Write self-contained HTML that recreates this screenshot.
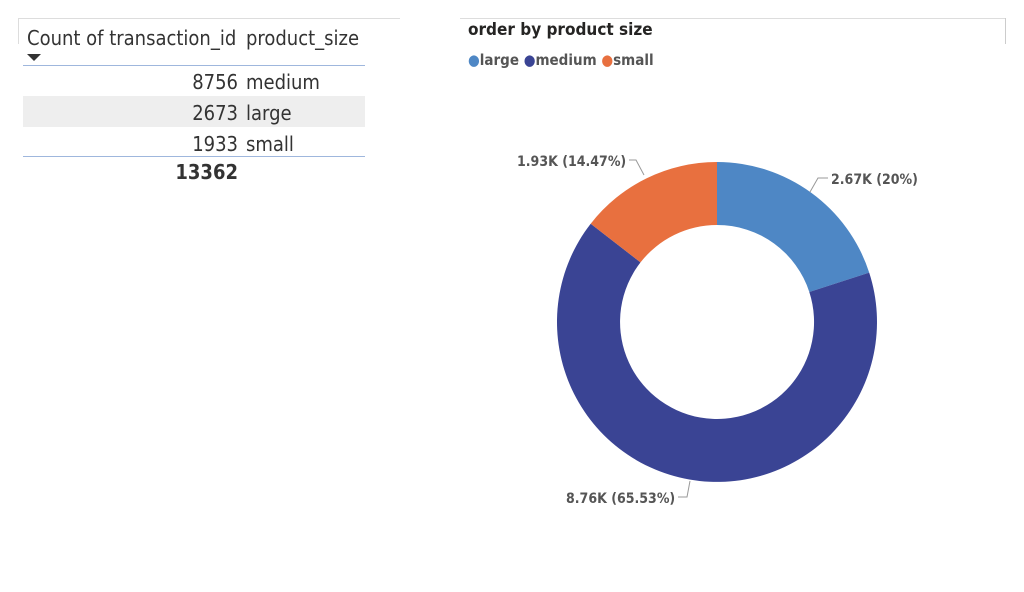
<!DOCTYPE html>
<html><head><meta charset="utf-8"><style>
body{margin:0;width:1024px;height:592px;background:#fff;position:relative;overflow:hidden;font-family:"DejaVu Sans","Liberation Sans",sans-serif;}
.t{position:absolute;font-size:20px;color:#333;font-family:"DejaVu Sans Condensed","DejaVu Sans",sans-serif;}
</style></head><body>
<div style="position:absolute;left:18px;top:18px;width:382px;height:1px;background:#ddd"></div>
<div style="position:absolute;left:18px;top:18px;width:1px;height:26px;background:#ddd"></div>
<div style="position:absolute;left:460px;top:18px;width:546px;height:1px;background:#ddd"></div>
<div style="position:absolute;left:1005px;top:18px;width:1px;height:26px;background:#ccc"></div>
<div class="t" style="left:27px;top:26px">Count of transaction_id</div>
<div class="t" style="left:246px;top:26px">product_size</div>
<svg style="position:absolute;left:27px;top:54px" width="14" height="8"><path d="M0 0H14L7 7Z" fill="#333"/></svg>
<div style="position:absolute;left:23px;top:65px;width:342px;height:1px;background:#9fb7dd"></div>
<div style="position:absolute;left:23px;top:96px;width:342px;height:31px;background:#eee"></div>
<div class="t" style="left:140px;top:70px;width:98px;text-align:right">8756</div><div class="t" style="left:246px;top:70px">medium</div>
<div class="t" style="left:140px;top:101px;width:98px;text-align:right">2673</div><div class="t" style="left:246px;top:101px">large</div>
<div class="t" style="left:140px;top:132px;width:98px;text-align:right">1933</div><div class="t" style="left:246px;top:132px">small</div>
<div style="position:absolute;left:23px;top:156px;width:342px;height:1px;background:#9fb7dd"></div>
<div class="t" style="left:140px;top:160px;width:98px;text-align:right;font-weight:bold">13362</div>
<div style="position:absolute;left:468px;top:20px;font-size:17px;font-weight:bold;color:#252423;font-family:'DejaVu Sans Condensed','DejaVu Sans',sans-serif">order by product size</div>
<div style="position:absolute;left:468px;top:51px;font-size:15px;font-weight:bold;color:#555;font-family:'DejaVu Sans Condensed','DejaVu Sans',sans-serif">
<span style="color:#4e87c5">●</span>large <span style="color:#3a4494">●</span>medium <span style="color:#e8703f">●</span>small</div>
<svg style="position:absolute;left:0;top:0" width="1024" height="592">
<path d="M717 162A160 160 0 0 1 869.2 272.6L809.3 292A97 97 0 0 0 717 225Z" fill="#4e87c5"/>
<path d="M869.2 272.6A160 160 0 1 1 590.7 223.7L640.5 262.4A97 97 0 1 0 809.3 292Z" fill="#3a4494"/>
<path d="M590.7 223.7A160 160 0 0 1 717 162L717 225A97 97 0 0 0 640.5 262.4Z" fill="#e8703f"/>
<g stroke="#999" fill="none" stroke-width="1">
<path d="M629 160H636L644 175"/><path d="M828 178H818L810 192"/><path d="M678 497H687L690 481"/></g>
<g font-family="DejaVu Sans Condensed,DejaVu Sans,sans-serif" font-weight="bold" font-size="14" fill="#555">
<text x="517" y="166">1.93K (14.47%)</text>
<text x="831" y="184">2.67K (20%)</text>
<text x="566" y="503">8.76K (65.53%)</text></g>
</svg>
</body></html>
